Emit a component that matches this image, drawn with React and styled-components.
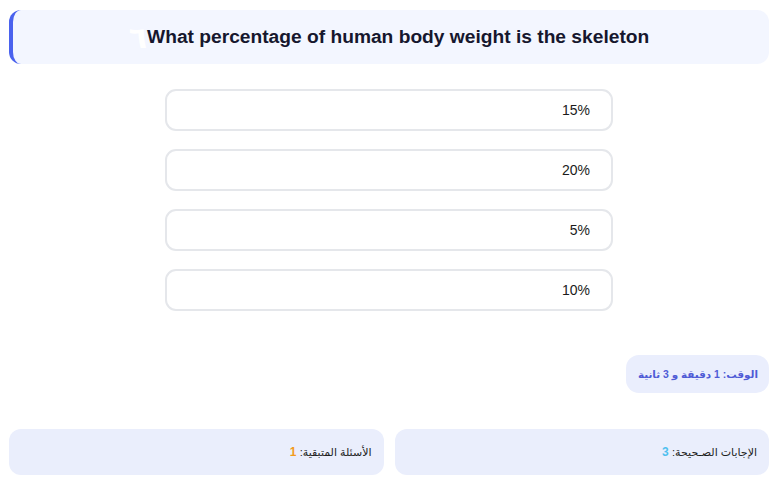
import React from "react";
import styled, { createGlobalStyle } from "styled-components";

const Global = createGlobalStyle`
  html, body { margin: 0; padding: 0; background: #ffffff; }
  body { font-family: "Liberation Sans", "DejaVu Sans", Arial, sans-serif; }
`;

const Page = styled.div`
  direction: rtl;
  padding: 10px 8px 10px 9px;
  display: flex;
  flex-direction: column;
`;

const QuestionBar = styled.div`
  height: 54px;
  box-sizing: border-box;
  background: #f3f6ff;
  border-radius: 12px;
  border-left: 4px solid #4a62ee;
  display: flex;
  align-items: center;
  justify-content: center;
  direction: ltr;
  font-size: 19.2px;
  font-weight: 700;
  color: #16172e;
  padding-right: 4px;
`;

const Num = styled.span`
  color: #ffffff;
  font-family: "DejaVu Sans", sans-serif;
  font-size: 30px;
  line-height: 1;
  font-weight: 700;
  margin-top: 2px;
`;

const Options = styled.div`
  display: flex;
  flex-direction: column;
  align-items: center;
  gap: 18px;
  margin-top: 25px;
`;

const Option = styled.div`
  width: 448px;
  height: 42px;
  box-sizing: border-box;
  border: 2px solid #e5e7eb;
  border-radius: 11px;
  background: #ffffff;
  display: flex;
  align-items: center;
  padding: 0 21px;
  font-size: 14px;
  color: #1b1b1b;
  direction: rtl;
`;

const TimerRow = styled.div`
  display: flex;
  justify-content: flex-start;
  margin-top: 44px;
`;

const Timer = styled.div`
  height: 38px;
  box-sizing: border-box;
  padding: 0 11px 0 12px;
  background: #eaeefd;
  border-radius: 13px;
  display: flex;
  align-items: center;
  font-size: 10.4px;
  font-weight: 700;
  color: #4f5bd6;
`;

const Stats = styled.div`
  display: grid;
  grid-template-columns: 1fr 1fr;
  gap: 11px;
  margin-top: 36px;
`;

const StatBox = styled.div`
  height: 46px;
  box-sizing: border-box;
  background: #eaeefc;
  border-radius: 12px;
  display: flex;
  align-items: center;
  padding: 0 12px;
  font-size: 11px;
  color: #1e1e1e;
`;

const Value = styled.span`
  font-weight: 700;
  font-size: 12px;
  color: ${(p) => p.$color};
`;

const answers = ["15%", "20%", "5%", "10%"];

export default function App() {
  return (
    <>
      <Global />
      <Page>
        <QuestionBar>
          <Num>٦</Num>
          What percentage of human body weight is the skeleton
        </QuestionBar>
        <Options>
          {answers.map((a) => (
            <Option key={a}>{a}</Option>
          ))}
        </Options>
        <TimerRow>
          <Timer>الوقت: 1 دقيقة و 3 ثانية</Timer>
        </TimerRow>
        <Stats>
          <StatBox>
            الإجابات الصـحيحة: <Value $color="#4fc0ef">&nbsp;3</Value>
          </StatBox>
          <StatBox>
            الأسئلة المتبقية: <Value $color="#f29b1c">&nbsp;1</Value>
          </StatBox>
        </Stats>
      </Page>
    </>
  );
}
